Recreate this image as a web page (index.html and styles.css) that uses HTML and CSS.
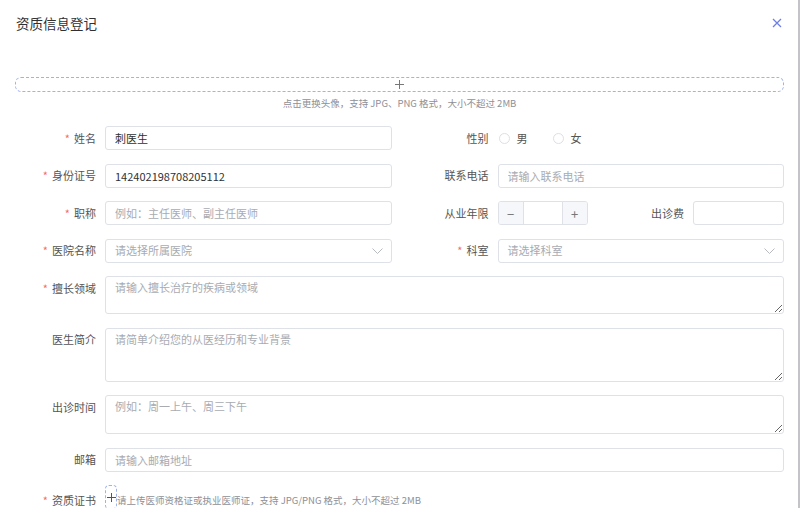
FILE: index.html
```html
<!DOCTYPE html>
<html lang="zh-CN">
<head>
    <meta charset="UTF-8">
    <meta name="viewport" content="width=device-width, initial-scale=1.0">
    <title>资质信息登记</title>
    <link rel="stylesheet" href="styles.css">
</head>
<body>
    <div class="dialog">
        <div class="dialog-header">
            <h2 class="dialog-title">资质信息登记</h2>
            <button class="close-btn" aria-label="关闭">
                <svg width="10" height="10" viewBox="0 0 10 10"><path d="M1 1 L9 9 M9 1 L1 9" stroke="#6f7fe6" stroke-width="1.3" fill="none"/></svg>
            </button>
        </div>

        <div class="avatar-upload">
            <div class="avatar-box">
                <svg width="9" height="9" viewBox="0 0 9 9"><path d="M4.5 0 V9 M0 4.5 H9" stroke="#777" stroke-width="1"/></svg>
            </div>
            <p class="hint">点击更换头像，支持 JPG、PNG 格式，大小不超过 2MB</p>
        </div>

        <form class="form">
            <div class="form-item">
                <label class="label required">姓名</label>
                <div class="field"><input class="input" type="text" value="刺医生"></div>
            </div>
            <div class="form-item">
                <label class="label">性别</label>
                <div class="field radios">
                    <span class="radio"><i></i>男</span>
                    <span class="radio"><i></i>女</span>
                </div>
            </div>

            <div class="form-item">
                <label class="label required">身份证号</label>
                <div class="field"><input class="input" type="text" value="142402198708205112"></div>
            </div>
            <div class="form-item">
                <label class="label">联系电话</label>
                <div class="field"><input class="input" type="text" placeholder="请输入联系电话"></div>
            </div>

            <div class="form-item">
                <label class="label required">职称</label>
                <div class="field"><input class="input" type="text" placeholder="例如：主任医师、副主任医师"></div>
            </div>
            <div class="form-item">
                <label class="label">从业年限</label>
                <div class="field split">
                    <div class="number">
                        <span class="num-btn">−</span>
                        <input class="num-input" type="text">
                        <span class="num-btn">+</span>
                    </div>
                    <label class="label sub-label">出诊费</label>
                    <input class="input fee" type="text">
                </div>
            </div>

            <div class="form-item">
                <label class="label required">医院名称</label>
                <div class="field">
                    <div class="select">
                        <span class="placeholder">请选择所属医院</span>
                        <svg width="11" height="6" viewBox="0 0 11 6"><path d="M0.5 0.5 L5.5 5.5 L10.5 0.5" stroke="#b8bbc2" stroke-width="1" fill="none"/></svg>
                    </div>
                </div>
            </div>
            <div class="form-item">
                <label class="label required">科室</label>
                <div class="field">
                    <div class="select">
                        <span class="placeholder">请选择科室</span>
                        <svg width="11" height="6" viewBox="0 0 11 6"><path d="M0.5 0.5 L5.5 5.5 L10.5 0.5" stroke="#b8bbc2" stroke-width="1" fill="none"/></svg>
                    </div>
                </div>
            </div>

            <div class="form-item wide">
                <label class="label required">擅长领域</label>
                <div class="field"><textarea class="textarea h38" placeholder="请输入擅长治疗的疾病或领域"></textarea></div>
            </div>
            <div class="form-item wide">
                <label class="label">医生简介</label>
                <div class="field"><textarea class="textarea h54" placeholder="请简单介绍您的从医经历和专业背景"></textarea></div>
            </div>
            <div class="form-item wide">
                <label class="label">出诊时间</label>
                <div class="field"><textarea class="textarea h39" placeholder="例如：周一上午、周三下午"></textarea></div>
            </div>
            <div class="form-item wide">
                <label class="label">邮箱</label>
                <div class="field"><input class="input" type="text" placeholder="请输入邮箱地址"></div>
            </div>
            <div class="form-item wide cert">
                <label class="label required">资质证书</label>
                <div class="field cert-field">
                    <div class="cert-box">
                        <svg width="9" height="9" viewBox="0 0 9 9"><path d="M4.5 0 V9 M0 4.5 H9" stroke="#555" stroke-width="1"/></svg>
                    </div>
                    <span class="cert-tip">请上传医师资格证或执业医师证，支持 JPG/PNG 格式，大小不超过 2MB</span>
                </div>
            </div>
        </form>
    </div>
</body>
</html>
```

FILE: styles.css
```css
* {
    margin: 0;
    padding: 0;
    box-sizing: border-box;
}

body {
    font-family: "Noto Sans CJK SC", "Noto Sans", sans-serif;
    background: #fff;
    color: #303133;
    height: 508px;
    overflow: hidden;
}

.dialog {
    width: 800px;
    height: 508px;
    border-right: 2px solid #c4c4c8;
    padding: 0 14px 0 15px;
}

.dialog-header {
    display: flex;
    justify-content: space-between;
    align-items: center;
    height: 46px;
    padding-left: 1px;
}

.dialog-title {
    font-size: 13.5px;
    font-weight: 400;
    color: #303133;
}

.close-btn {
    border: none;
    background: none;
    width: 12px;
    height: 12px;
    display: flex;
    align-items: center;
    justify-content: center;
    margin-right: 1px;
}

.avatar-upload {
    padding-top: 31px;
    display: flex;
    flex-direction: column;
    align-items: center;
}

.avatar-box {
    width: 100%;
    height: 15px;
    border: 1px dashed #9db2ee;
    border-radius: 6px;
    display: flex;
    align-items: center;
    justify-content: center;
}

.hint {
    font-size: 9.5px;
    color: #8e9097;
    margin-top: 5px;
    height: 12px;
    line-height: 12px;
}

.form {
    display: grid;
    grid-template-columns: 1fr 1fr;
    column-gap: 16px;
    row-gap: 13.5px;
    margin-top: 17px;
}

.form-item {
    display: flex;
    align-items: center;
    height: 24px;
}

.form-item.wide {
    grid-column: span 2;
    align-items: flex-start;
    height: auto;
}

.form-item.cert {
    margin-top: 3px;
    height: 20px;
}

.label {
    width: 90px;
    height: 24px;
    flex-shrink: 0;
    padding-right: 9px;
    display: flex;
    align-items: center;
    justify-content: flex-end;
    font-size: 11px;
    line-height: 1;
    color: #555;
    white-space: nowrap;
}

.label.required::before {
    content: "*";
    color: #f56c6c;
    margin-right: 4px;
}

.field {
    flex: 1;
    min-width: 0;
}

.input,
.select,
.textarea {
    display: block;
    width: 100%;
    height: 24px;
    border: 1px solid #dfe1e8;
    border-radius: 3px;
    padding: 0 9px;
    font-family: inherit;
    font-size: 11px;
    color: #303133;
    background: #fff;
    outline: none;
}

.input::placeholder,
.textarea::placeholder {
    color: #a8abb2;
}

.select {
    display: flex;
    align-items: center;
    justify-content: space-between;
    padding-right: 8px;
}

.placeholder {
    color: #a8abb2;
    line-height: 1;
}

.textarea {
    padding: 2px 9px;
    line-height: 16px;
    resize: vertical;
}

.h38 { height: 38px; }
.h54 { height: 54px; }
.h39 { height: 39px; }

.radios {
    display: flex;
    gap: 25px;
    padding-left: 1px;
    height: 24px;
    align-items: center;
}

.radio {
    display: flex;
    align-items: center;
    font-size: 11px;
    line-height: 1;
    color: #555;
    gap: 7px;
}

.radio i {
    width: 11px;
    height: 11px;
    border: 1px solid #dcdfe6;
    border-radius: 50%;
}

.split {
    display: flex;
    align-items: center;
    height: 24px;
}

.number {
    display: flex;
    width: 90px;
    height: 24px;
    border: 1px solid #dfe1e8;
    border-radius: 3px;
    overflow: hidden;
}

.num-btn {
    width: 24px;
    background: #f5f7fa;
    color: #777;
    font-size: 13px;
    line-height: 1;
    display: flex;
    align-items: center;
    justify-content: center;
}

.num-input {
    flex: 1;
    min-width: 0;
    border: none;
    border-left: 1px solid #dfe1e8;
    border-right: 1px solid #dfe1e8;
    outline: none;
}

.sub-label {
    flex: 1;
    width: auto;
}

.fee {
    width: 91px;
    flex-shrink: 0;
}

.cert-field {
    display: flex;
    align-items: flex-start;
}

.cert-box {
    width: 12px;
    height: 24px;
    border: 1px dashed #9db2ee;
    border-radius: 4px;
    display: flex;
    align-items: center;
    justify-content: center;
    margin-top: -3px;
}

.cert-tip {
    font-size: 9.5px;
    line-height: 1;
    color: #8e9097;
    margin-top: 8px;
    white-space: nowrap;
}
```
